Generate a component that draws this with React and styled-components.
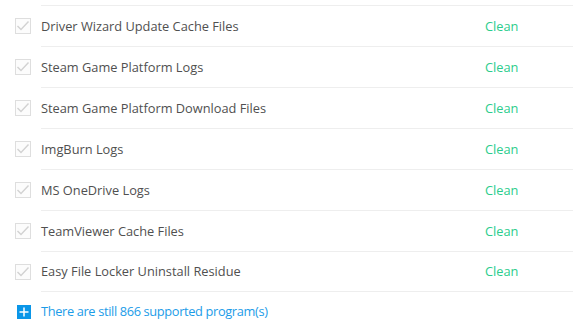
import React from 'react';
import styled, { createGlobalStyle } from 'styled-components';

const GlobalStyle = createGlobalStyle`
  html, body {
    margin: 0;
    padding: 0;
    background: #fff;
  }
  body {
    font-family: "Open Sans", "Noto Sans", sans-serif;
  }
`;

const items = [
  'Driver Wizard Update Cache Files',
  'Steam Game Platform Logs',
  'Steam Game Platform Download Files',
  'ImgBurn Logs',
  'MS OneDrive Logs',
  'TeamViewer Cache Files',
  'Easy File Locker Uninstall Residue',
];

const Page = styled.div`
  width: 581px;
  height: 328px;
  overflow: hidden;
  padding: 5px 8px 0 15px;
  box-sizing: border-box;
`;

const List = styled.div`
  display: flex;
  flex-direction: column;
`;

const Row = styled.div`
  display: grid;
  grid-template-columns: 26px 1fr;
  align-items: stretch;
  height: 41px;
`;

const Check = styled.span`
  align-self: center;
  width: 16px;
  height: 16px;
  margin-top: 1px;
  box-sizing: border-box;
  border: 1px solid #dedede;
  background: #fcfcfc;
  display: flex;
  align-items: center;
  justify-content: center;
`;

const Content = styled.div`
  display: grid;
  grid-template-columns: 1fr 88px;
  align-items: center;
  border-top: 1px solid #eeeeee;
  ${Row}:last-child & {
    border-bottom: 1px solid #eeeeee;
  }
`;

const Name = styled.span`
  font-size: 12.8px;
  color: #505050;
  margin-top: -1px;
`;

const Status = styled.span`
  font-size: 12.8px;
  color: #2bcd8c;
  margin-top: -1px;
`;

const Footer = styled.div`
  display: grid;
  grid-template-columns: 26px 1fr;
  align-items: center;
  height: 40px;
`;

const PlusBox = styled.span`
  width: 14px;
  height: 14px;
  margin-left: 2px;
  background: #0a96e8;
  display: flex;
  align-items: center;
  justify-content: center;
`;

const MoreLink = styled.a`
  font-size: 12.8px;
  letter-spacing: -0.35px;
  color: #1c9ce8;
  text-decoration: none;
  cursor: pointer;
  margin-top: -2px;
`;

function CheckMark() {
  return (
    <svg width="14" height="12" viewBox="0 0 14 12">
      <path d="M1.5 6 L5 9.5 L12.5 1.5" fill="none" stroke="#d2d2d2" strokeWidth="1.4" />
    </svg>
  );
}

function Plus() {
  return (
    <svg width="10" height="10" viewBox="0 0 10 10">
      <path d="M5 0.5 V9.5 M0.5 5 H9.5" stroke="#fff" strokeWidth="1.5" />
    </svg>
  );
}

export default function App() {
  return (
    <Page>
      <GlobalStyle />
      <List>
        {items.map((name) => (
          <Row key={name}>
            <Check>
              <CheckMark />
            </Check>
            <Content>
              <Name>{name}</Name>
              <Status>Clean</Status>
            </Content>
          </Row>
        ))}
      </List>
      <Footer>
        <PlusBox>
          <Plus />
        </PlusBox>
        <MoreLink>There are still 866 supported program(s)</MoreLink>
      </Footer>
    </Page>
  );
}
